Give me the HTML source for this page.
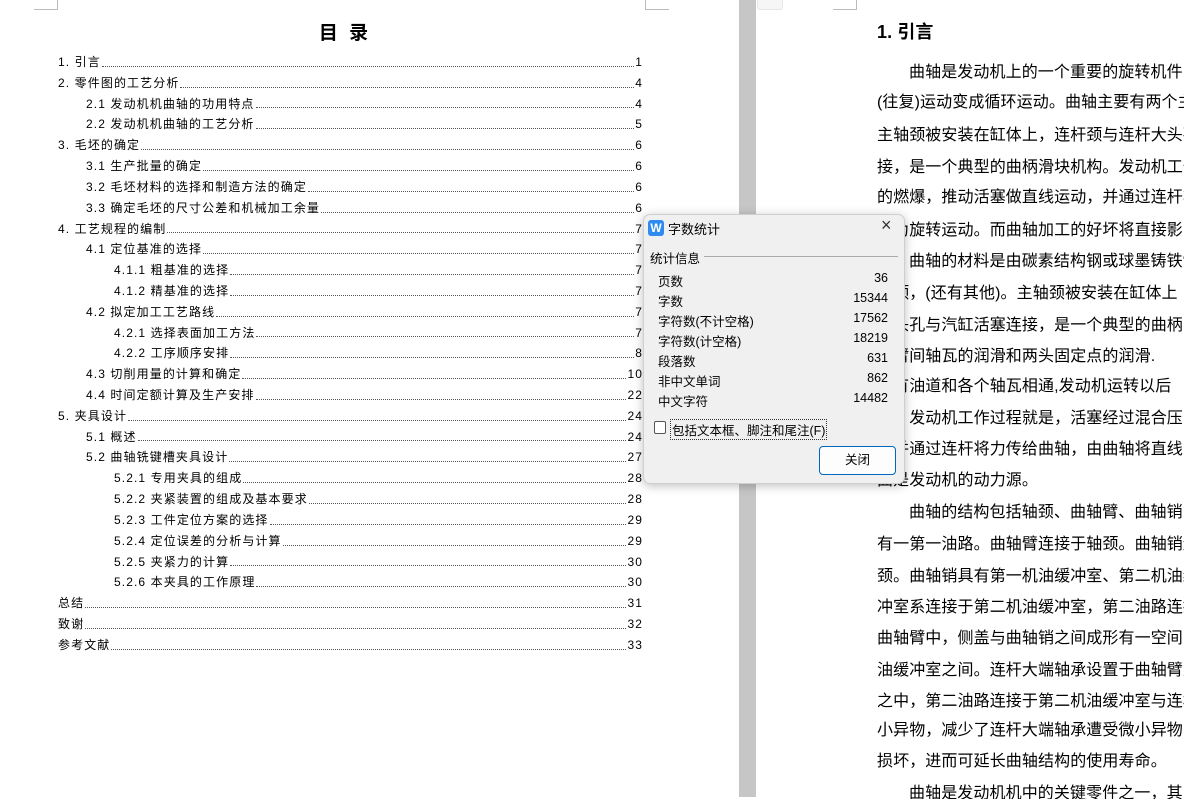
<!DOCTYPE html>
<html><head><meta charset="utf-8"><style>
*{margin:0;padding:0;box-sizing:border-box}
body{width:1184px;height:797px;overflow:hidden;background:#fff;position:relative;font-family:"Liberation Sans","Noto Sans CJK SC",sans-serif;color:#000}
.strip{position:absolute;left:739px;top:0;width:17px;height:797px;background:#c6c6c6}
.tab{position:absolute;left:757px;top:-4px;width:26px;height:14px;background:#f6f6f6;border:1px solid #e6e6e6;border-radius:3px}
.mark{position:absolute;border-color:#bbb;border-style:solid;width:24px;height:10px}
h1{position:absolute;left:0;width:690px;top:18px;text-align:center;font-size:19px;font-weight:bold;letter-spacing:3px}
.toc{position:absolute;left:58px;width:585px;top:52px;font-size:12px;letter-spacing:1.1px}
.toc div{height:20.82px;line-height:20.82px;display:flex;white-space:nowrap}
.toc .d{flex:1;border-bottom:1px dotted #555;margin:0 1px 6px;}
.l2{padding-left:28px}.l3{padding-left:56px}
.rp{position:absolute;left:877px;top:2px;width:307px;height:797px;overflow:hidden;font-size:16px;letter-spacing:0.1px}
.rp div{position:absolute;left:0;white-space:nowrap;line-height:20px}
.dlg{position:absolute;left:643px;top:214px;width:262px;height:270px;background:#f0f0f0;border:1px solid #cfcfcf;border-radius:7px;box-shadow:0 2px 10px rgba(0,0,0,.25);font-size:12.5px}
.dlg .r{position:absolute;left:14px;width:230px;display:flex;justify-content:space-between}
</style></head><body>
<div class="mark" style="left:34px;top:0;border-width:0 1px 1px 0"></div>
<div class="mark" style="left:645px;top:0;border-width:0 0 1px 1px"></div>
<div class="mark" style="left:833px;top:0;border-width:0 1px 1px 0"></div>
<div class="strip"></div>
<div class="tab"></div>
<h1>目 录</h1>
<div class="toc">
<div>1. 引言<span class="d"></span>1</div>
<div>2.  零件图的工艺分析<span class="d"></span>4</div>
<div class="l2">2.1 发动机机曲轴的功用特点<span class="d"></span>4</div>
<div class="l2">2.2 发动机机曲轴的工艺分析<span class="d"></span>5</div>
<div>3. 毛坯的确定<span class="d"></span>6</div>
<div class="l2">3.1 生产批量的确定<span class="d"></span>6</div>
<div class="l2">3.2 毛坯材料的选择和制造方法的确定<span class="d"></span>6</div>
<div class="l2">3.3 确定毛坯的尺寸公差和机械加工余量<span class="d"></span>6</div>
<div>4. 工艺规程的编制<span class="d"></span>7</div>
<div class="l2">4.1 定位基准的选择<span class="d"></span>7</div>
<div class="l3">4.1.1 粗基准的选择<span class="d"></span>7</div>
<div class="l3">4.1.2 精基准的选择<span class="d"></span>7</div>
<div class="l2">4.2 拟定加工工艺路线<span class="d"></span>7</div>
<div class="l3">4.2.1 选择表面加工方法<span class="d"></span>7</div>
<div class="l3">4.2.2 工序顺序安排<span class="d"></span>8</div>
<div class="l2">4.3 切削用量的计算和确定<span class="d"></span>10</div>
<div class="l2">4.4 时间定额计算及生产安排<span class="d"></span>22</div>
<div>5. 夹具设计<span class="d"></span>24</div>
<div class="l2">5.1 概述<span class="d"></span>24</div>
<div class="l2">5.2 曲轴铣键槽夹具设计<span class="d"></span>27</div>
<div class="l3">5.2.1 专用夹具的组成<span class="d"></span>28</div>
<div class="l3">5.2.2 夹紧装置的组成及基本要求<span class="d"></span>28</div>
<div class="l3">5.2.3 工件定位方案的选择<span class="d"></span>29</div>
<div class="l3">5.2.4 定位误差的分析与计算<span class="d"></span>29</div>
<div class="l3">5.2.5 夹紧力的计算<span class="d"></span>30</div>
<div class="l3">5.2.6 本夹具的工作原理<span class="d"></span>30</div>
<div>总结<span class="d"></span>31</div>
<div>致谢<span class="d"></span>32</div>
<div>参考文献<span class="d"></span>33</div>
</div>
<div class="rp">
<div style="top:20px;font-size:18px;font-weight:bold">1. 引言</div>
<div style="top:61px;left:32px">曲轴是发动机上的一个重要的旋转机件</div>
<div style="top:91px">(往复)运动变成循环运动。曲轴主要有两个主</div>
<div style="top:124px">主轴颈被安装在缸体上，连杆颈与连杆大头孔</div>
<div style="top:156px">接，是一个典型的曲柄滑块机构。发动机工作</div>
<div style="top:186px">的燃爆，推动活塞做直线运动，并通过连杆将</div>
<div style="top:219px">变为旋转运动。而曲轴加工的好坏将直接影</div>
<div style="top:250px;left:32px">曲轴的材料是由碳素结构钢或球墨铸铁制</div>
<div style="top:282px">杆颈，(还有其他)。主轴颈被安装在缸体上</div>
<div style="top:314px">小头孔与汽缸活塞连接，是一个典型的曲柄</div>
<div style="top:345px">曲臂间轴瓦的润滑和两头固定点的润滑.</div>
<div style="top:375px">会有油道和各个轴瓦相通,发动机运转以后</div>
<div style="top:407px">混。发动机工作过程就是，活塞经过混合压</div>
<div style="top:438px">，并通过连杆将力传给曲轴，由曲轴将直线</div>
<div style="top:469px">曲是发动机的动力源。</div>
<div style="top:501px;left:32px">曲轴的结构包括轴颈、曲轴臂、曲轴销</div>
<div style="top:533px">有一第一油路。曲轴臂连接于轴颈。曲轴销连</div>
<div style="top:565px">颈。曲轴销具有第一机油缓冲室、第二机油缓</div>
<div style="top:596px">冲室系连接于第二机油缓冲室，第二油路连接</div>
<div style="top:627px">曲轴臂中，侧盖与曲轴销之间成形有一空间</div>
<div style="top:659px">油缓冲室之间。连杆大端轴承设置于曲轴臂之</div>
<div style="top:690px">之中，第二油路连接于第二机油缓冲室与连杆</div>
<div style="top:719px">小异物，减少了连杆大端轴承遭受微小异物的</div>
<div style="top:750px">损坏，进而可延长曲轴结构的使用寿命。</div>
<div style="top:782px;left:32px">曲轴是发动机机中的关键零件之一，其</div>
</div>
<div class="dlg">
<div style="position:absolute;left:4px;top:5px;width:16px;height:16px;background:#2e8cf0;border-radius:3px;color:#fff;font-size:12px;font-weight:bold;line-height:16px;text-align:center">W</div>
<div style="position:absolute;left:24px;top:4px;font-size:13px">字数统计</div>
<div style="position:absolute;left:237px;top:0px;font-size:18px;color:#333">×</div>
<div style="position:absolute;left:6px;top:33px">统计信息</div>
<div style="position:absolute;left:60px;top:41px;width:194px;height:1px;background:#aaa"></div>
<div class="r" style="top:56px"><span>页数</span><span>36</span></div>
<div class="r" style="top:76px"><span>字数</span><span>15344</span></div>
<div class="r" style="top:96px"><span>字符数(不计空格)</span><span>17562</span></div>
<div class="r" style="top:116px"><span>字符数(计空格)</span><span>18219</span></div>
<div class="r" style="top:136px"><span>段落数</span><span>631</span></div>
<div class="r" style="top:156px"><span>非中文单词</span><span>862</span></div>
<div class="r" style="top:176px"><span>中文字符</span><span>14482</span></div>
<div style="position:absolute;left:10px;top:206px;width:12px;height:13px;border:1px solid #555;border-radius:2px;background:#fff"></div>
<div style="position:absolute;left:26px;top:204px;border:1px dotted #333;padding:0 1px">包括文本框、脚注和尾注(F)</div>
<div style="position:absolute;left:175px;top:231px;width:77px;height:29px;border:1px solid #0067c0;border-radius:4px;background:#fdfdfd;text-align:center;line-height:27px">关闭</div>
</div>
</body></html>
